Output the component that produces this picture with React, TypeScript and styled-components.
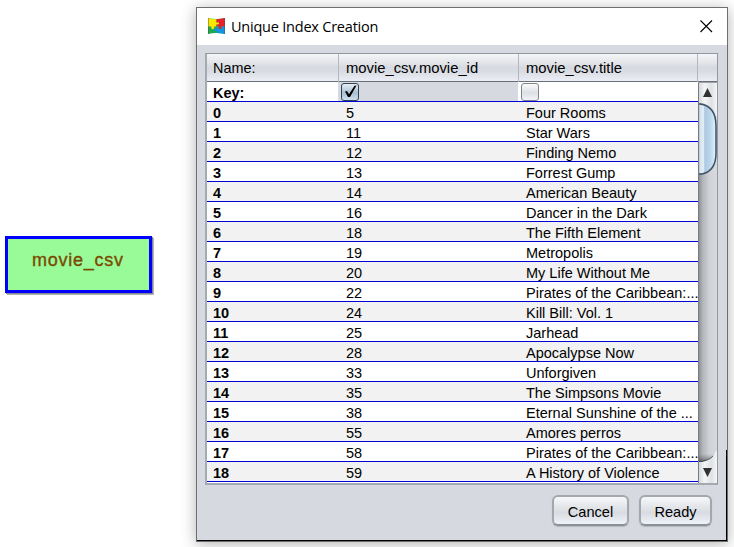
import React from "react";
import styled, { createGlobalStyle } from "styled-components";

const GlobalStyle = createGlobalStyle`
  * { box-sizing: border-box; }
  body { margin: 0; background: #fff; overflow: hidden; font-family: "Liberation Sans", Arial, sans-serif; color: #000; }
`;

const Desktop = styled.main`
  display: flex;
  width: 734px;
  height: 547px;
  overflow: hidden;
  background: #fff;
`;

const Canvas = styled.section`
  width: 196px;
  flex: none;
  padding: 236px 0 0 5px;
`;

const EntityNode = styled.div`
  width: 147px;
  height: 57px;
  border: 3px solid #0000ff;
  background: #98fb98;
  box-shadow: 1px 1px 0 #85859a, 2px 2px 0 #b5b5b5;
  color: #7a4a00;
  font-size: 18px;
  line-height: 22px;
  padding: 10px 0 0 24px;
  letter-spacing: 0.75px;
  -webkit-text-stroke: 0.35px #7a4a00;
`;

const Dialog = styled.section`
  position: relative;
  flex: none;
  width: 532px;
  height: 535px;
  margin-top: 7px;
  border: 1px solid #6d6e70;
  background: #d6d9e0;
  box-shadow: 0 2px 14px rgba(0, 0, 0, 0.3);
  display: flex;
  flex-direction: column;
`;

const BottomEdge = styled.div`
  position: absolute;
  left: 0;
  right: 0;
  bottom: 0;
  height: 1px;
  background: #000;
`;

const RightEdge = styled.div`
  position: absolute;
  right: 0;
  bottom: 0;
  width: 1px;
  height: 91px;
  background: #000;
`;

const TitleBar = styled.header`
  display: flex;
  align-items: center;
  height: 37px;
  flex: none;
  background: #fff;
  padding: 0 14px 0 11px;
`;

const Title = styled.h1`
  margin: 0 auto 0 6px;
  font: 400 14.5px/20px "Open Sans", sans-serif;
  letter-spacing: -0.22px;
  white-space: nowrap;
`;

const TableFrame = styled.div`
  display: flex;
  flex-direction: column;
  width: 513px;
  height: 432px;
  margin: 8px 0 0 8px;
  flex: none;
  border: 1px solid #9297a1;
  border-left: 2px solid #a5a9b2;
  border-bottom: 2px solid #a5a9b2;
  background: #fff;
`;

const columns = "131px 180px 180px 1fr";

const HeaderRow = styled.div`
  display: grid;
  grid-template-columns: 132px 180px 179px 1fr;
  height: 28px;
  flex: none;
  border-bottom: 1px solid #686d76;
  background: linear-gradient(#f4f5f7 0, #e4e6ea 30%, #d6d9df 50%, #d9dce2 65%, #ebeef6 100%);
`;

const HeaderCell = styled.div`
  border-right: 1px solid #b3b7bf;
  padding-left: 7px;
  font-size: 14.8px;
  line-height: 28px;
  white-space: nowrap;

  &:first-child { padding-left: 6px; font-size: 14.4px; }
  &:last-child { border: 0; }
`;

const TableBody = styled.div`
  display: flex;
  flex: 1;
  min-height: 0;
`;

const Rows = styled.div`
  width: 491px;
  flex: none;
`;

const Row = styled.div<{ $shaded?: boolean }>`
  display: grid;
  grid-template-columns: ${columns};
  height: 20px;
  border-bottom: 1px solid #0000d8;
  background: ${(p) => (p.$shaded ? "#f2f2f2" : "#fff")};
`;

const Cell = styled.div<{ $bold?: boolean; $selected?: boolean }>`
  padding-left: ${(p) => (p.$bold ? 6 : 8)}px;
  font-size: 14.5px;
  font-weight: ${(p) => (p.$bold ? 700 : 400)};
  line-height: 22px;
  height: 19px;
  white-space: nowrap;
  background: ${(p) => (p.$selected ? "#d6d9e0" : "transparent")};
`;

const CheckCell = styled(Cell)`
  padding: 1px 0 0 3px;
  line-height: 0;
`;

const CheckBox = styled.span<{ $checked?: boolean }>`
  display: inline-block;
  width: 18px;
  height: 18px;
  border: 1px solid ${(p) => (p.$checked ? "#2f4256" : "#7f848c")};
  border-radius: 3px;
  background: ${(p) =>
    p.$checked
      ? "linear-gradient(#e6eef5, #a9bfd2 55%, #cfe0ee)"
      : "linear-gradient(#fafafb, #dde0e5 55%, #f0f2f7)"};
`;

const ScrollBar = styled.div`
  width: 19px;
  height: 401px;
  flex: none;
`;

const ActionBar = styled.footer`
  display: flex;
  justify-content: flex-end;
  gap: 10px;
  padding: 10px 15px 0 0;
`;

const ActionButton = styled.button<{ $width: number }>`
  width: ${(p) => p.$width}px;
  height: 31px;
  padding: 2px 0 0;
  border: 2px solid #a3a7ae;
  border-bottom-color: #8b8f96;
  border-radius: 6px;
  background: linear-gradient(#f6f7f8, #dfe2e6 45%, #d8dbe1 58%, #eff2f8);
  box-shadow: 0 1px 1px #b5b8bf;
  font: 14.6px/20px "Liberation Sans", Arial, sans-serif;
  color: #000;
`;

const titles: [number, string][] = [
  [5, "Four Rooms"],
  [11, "Star Wars"],
  [12, "Finding Nemo"],
  [13, "Forrest Gump"],
  [14, "American Beauty"],
  [16, "Dancer in the Dark"],
  [18, "The Fifth Element"],
  [19, "Metropolis"],
  [20, "My Life Without Me"],
  [22, "Pirates of the Caribbean:..."],
  [24, "Kill Bill: Vol. 1"],
  [25, "Jarhead"],
  [28, "Apocalypse Now"],
  [33, "Unforgiven"],
  [35, "The Simpsons Movie"],
  [38, "Eternal Sunshine of the ..."],
  [55, "Amores perros"],
  [58, "Pirates of the Caribbean:..."],
  [59, "A History of Violence"],
];

const PuzzleIcon = () => (
  <svg width="17" height="17" viewBox="0 0 17 17">
    <path d="M0 0Q8 2 17 0V16Q8 14 0 16Z" fill="#20a84a" />
    <path d="M0 0Q4 1.200 8.500 1.200V4.500C12 3 12 7.500 8.500 6.500V8.500H6C7.500 12 2 12 3.500 8.500H0Z" fill="#fbe800" />
    <path d="M8.500 1.200Q13 1 17 0V8.500H13.500C14.500 12 9.500 12 11 8.500H8.500V6.500C12 7.500 12 3 8.500 4.500Z" fill="#ea1f2b" />
    <path d="M17 8.500V16Q13 15 8.500 15V12.800C5 14 5 9.800 8.500 10.800V8.500H11C9.500 12 14.500 12 13.500 8.500Z" fill="#1494e0" />
    <path d="M.5 0V16M16.500 0V16" stroke="#4c554e" strokeOpacity=".45" />
  </svg>
);

const CloseIcon = () => (
  <svg width="13" height="13" viewBox="0 0 13 13">
    <path d="M.5 .5L12 12M12 .5L.5 12" stroke="#000" strokeWidth="1.100" />
  </svg>
);

const CheckMark = () => (
  <svg width="16" height="16" viewBox="0 0 16 16">
    <path d="M3 7.500L5 7L7 10.200L12.500 1.800L14.500 1.500L8 13H6Z" fill="#000" />
  </svg>
);

const ScrollGraphic = () => (
  <svg width="19" height="401" viewBox="0 0 19 401" display="block">
    <defs>
      <linearGradient id="track">
        <stop offset="0" stopColor="#84878c" />
        <stop offset=".25" stopColor="#b2b5ba" />
        <stop offset=".6" stopColor="#d0d2d6" />
        <stop offset="1" stopColor="#d8dadd" />
      </linearGradient>
      <linearGradient id="cap">
        <stop offset="0" stopColor="#d0d2d6" />
        <stop offset=".35" stopColor="#f4f5f6" />
        <stop offset=".7" stopColor="#dfe1e4" />
        <stop offset="1" stopColor="#f4f5f6" />
      </linearGradient>
      <linearGradient id="thumb">
        <stop offset="0" stopColor="#83a0b8" />
        <stop offset=".12" stopColor="#d6e3ee" />
        <stop offset=".3" stopColor="#e2edf6" />
        <stop offset=".38" stopColor="#adc8df" />
        <stop offset=".7" stopColor="#bdd7ed" />
        <stop offset="1" stopColor="#e0f4ff" />
      </linearGradient>
      <linearGradient id="fade" x1="0" y1="0" x2="0" y2="1">
        <stop offset="0" stopColor="#444" stopOpacity="0" />
        <stop offset="1" stopColor="#222" stopOpacity=".7" />
      </linearGradient>
    </defs>
    <path d="M0 0H19V401H0Z" fill="url(#track)" />
    <path d="M0 0H19V36Q15 21 1 21H0Z" fill="url(#cap)" />
    <path d="M0 372H19V382H0Z" fill="url(#fade)" />
    <path d="M0 380H3Q15 378 18 369H19V401H0Z" fill="url(#cap)" />
    <path d="M0 379.500H3Q12 378 15 374" fill="none" stroke="#30343a" strokeOpacity=".7" />
    <path d="M0 22H2Q18 24 18 44V71Q18 89 4 92H0Z" fill="url(#thumb)" />
    <path d="M0 22H2Q18 24 18 44V71Q18 89 4 92H0" fill="none" stroke="#3b5266" strokeWidth="1.500" />
    <path d="M.5 0V401" stroke="#777b82" />
    <path d="M0 .5H19" stroke="#a1a4aa" />
    <path d="M9.500 6L14 15H5Z" fill="#303134" />
    <path d="M5 386H14L9.500 395Z" fill="#303134" />
  </svg>
);

export default function App() {
  return (
    <>
      <GlobalStyle />
      <Desktop>
        <Canvas>
          <EntityNode>movie_csv</EntityNode>
        </Canvas>
        <Dialog>
          <TitleBar>
            <PuzzleIcon />
            <Title>Unique Index Creation</Title>
            <CloseIcon />
          </TitleBar>
          <TableFrame>
            <HeaderRow>
              <HeaderCell>Name:</HeaderCell>
              <HeaderCell>movie_csv.movie_id</HeaderCell>
              <HeaderCell>movie_csv.title</HeaderCell>
              <HeaderCell />
            </HeaderRow>
            <TableBody>
              <Rows>
                <Row>
                  <Cell $bold>Key:</Cell>
                  <CheckCell $selected>
                    <CheckBox $checked>
                      <CheckMark />
                    </CheckBox>
                  </CheckCell>
                  <CheckCell>
                    <CheckBox />
                  </CheckCell>
                </Row>
                {titles.map(([id, title], index) => (
                  <Row key={id} $shaded={index % 2 === 0}>
                    <Cell $bold>{index}</Cell>
                    <Cell>{id}</Cell>
                    <Cell>{title}</Cell>
                  </Row>
                ))}
              </Rows>
              <ScrollBar>
                <ScrollGraphic />
              </ScrollBar>
            </TableBody>
          </TableFrame>
          <ActionBar>
            <ActionButton $width={77}>Cancel</ActionButton>
            <ActionButton $width={73}>Ready</ActionButton>
          </ActionBar>
          <BottomEdge />
          <RightEdge />
        </Dialog>
      </Desktop>
    </>
  );
}
